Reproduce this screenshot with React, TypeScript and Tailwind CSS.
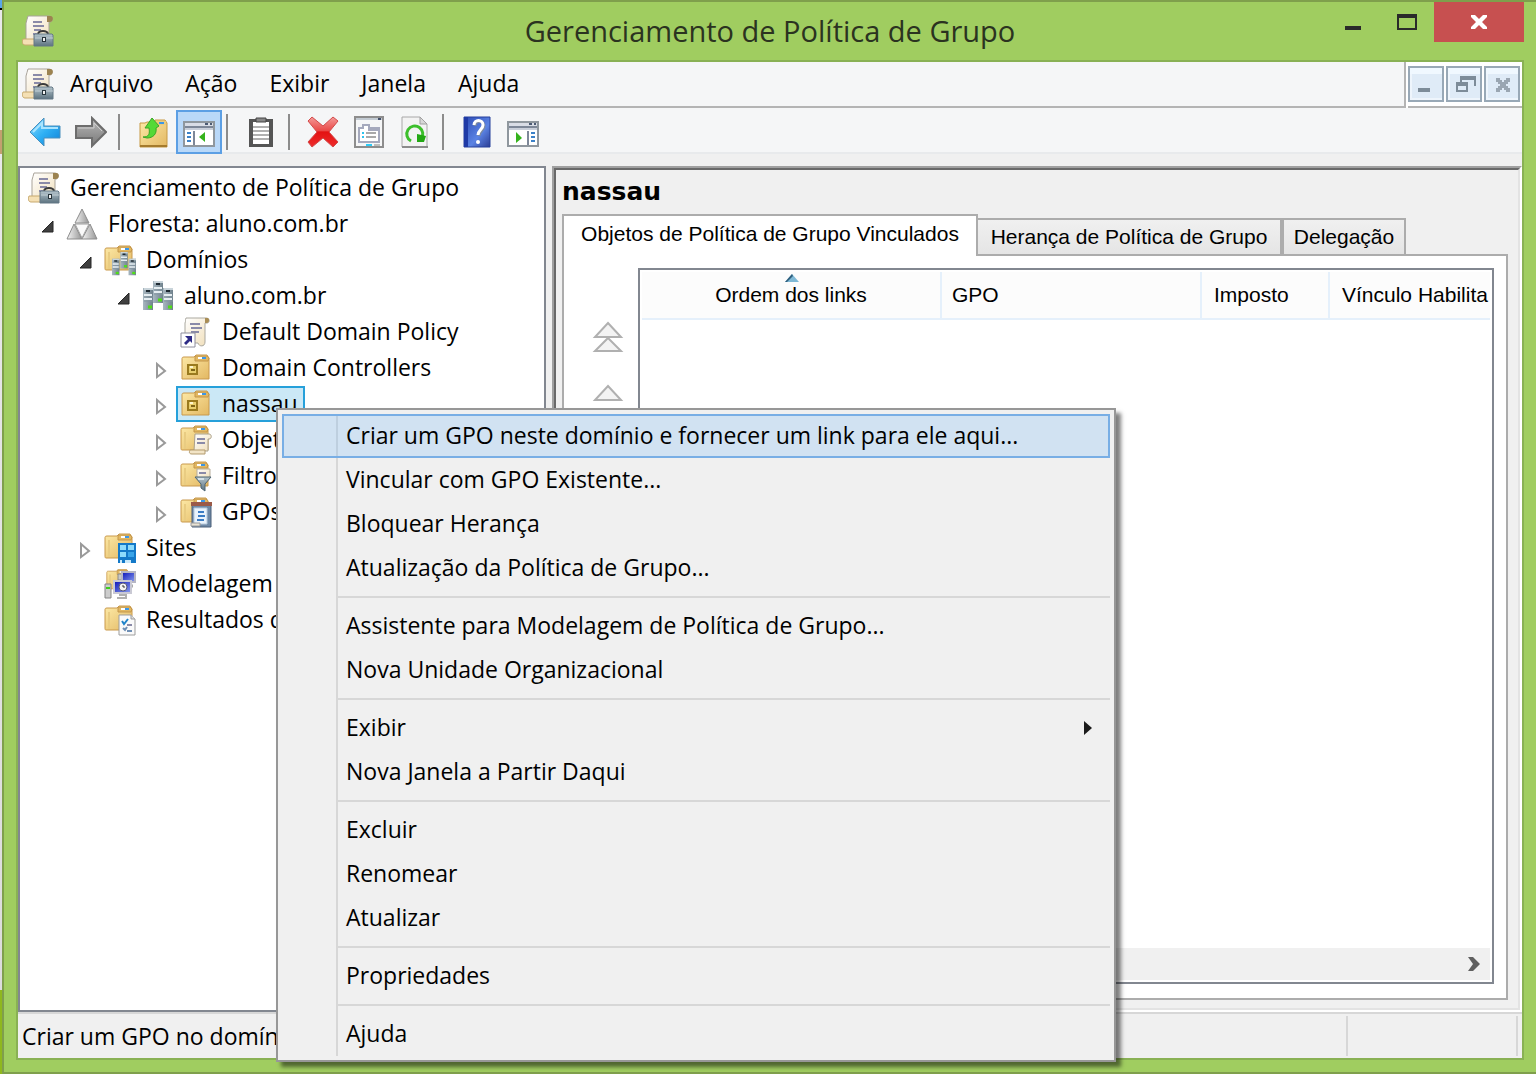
import type { ReactNode } from "react";

const UI = "font-['Open_Sans',sans-serif]";
const LEGACY = "font-['Liberation_Sans',sans-serif]";

function Icon({ children, className = "h-8 w-8" }: { children: ReactNode; className?: string }) {
  return (
    <svg viewBox="0 0 32 32" className={`${className} shrink-0`} aria-hidden="true">
      {children}
    </svg>
  );
}

function Defs() {
  return (
    <svg className="absolute h-0 w-0" aria-hidden="true">
      <defs>
        <linearGradient id="paper" x1="0" y1="0" x2="1" y2="1">
          <stop offset="0" stopColor="#ffffff" />
          <stop offset="1" stopColor="#f0deb8" />
        </linearGradient>
        <linearGradient id="folder" x1="0" y1="0" x2="1" y2="1">
          <stop offset="0" stopColor="#fdeaa8" />
          <stop offset="1" stopColor="#e3b862" />
        </linearGradient>
        <linearGradient id="steel" x1="0" y1="0" x2="0" y2="1">
          <stop offset="0" stopColor="#b4c4cc" />
          <stop offset="1" stopColor="#5d7380" />
        </linearGradient>
        <linearGradient id="blueArrow" x1="0" y1="0" x2="1" y2="1">
          <stop offset="0" stopColor="#8fdcff" />
          <stop offset="0.5" stopColor="#2fb0f4" />
          <stop offset="1" stopColor="#0d7fd6" />
        </linearGradient>
        <linearGradient id="grayArrow" x1="0" y1="0" x2="0" y2="1">
          <stop offset="0" stopColor="#b9b9b9" />
          <stop offset="1" stopColor="#787878" />
        </linearGradient>
        <linearGradient id="red" x1="0" y1="0" x2="0" y2="1">
          <stop offset="0" stopColor="#f49a98" />
          <stop offset="0.45" stopColor="#ea4a48" />
          <stop offset="0.5" stopColor="#e31212" />
          <stop offset="1" stopColor="#ee2c2c" />
        </linearGradient>
        <linearGradient id="help" x1="0" y1="0" x2="1" y2="1">
          <stop offset="0" stopColor="#2c4bb4" />
          <stop offset="0.6" stopColor="#5b83e4" />
          <stop offset="1" stopColor="#2b3d94" />
        </linearGradient>
        <linearGradient id="tri" x1="0" y1="0" x2="1" y2="0">
          <stop offset="0" stopColor="#f4f4f4" />
          <stop offset="1" stopColor="#969696" />
        </linearGradient>
        <linearGradient id="server" x1="0" y1="0" x2="1" y2="0">
          <stop offset="0" stopColor="#a9b8c1" />
          <stop offset="1" stopColor="#6f818c" />
        </linearGradient>
        <linearGradient id="screen" x1="0" y1="0" x2="1" y2="1">
          <stop offset="0" stopColor="#0a12b8" />
          <stop offset="1" stopColor="#8ba0f0" />
        </linearGradient>
      </defs>
    </svg>
  );
}

/* Scroll of parchment with a small toolbox in front */
function GpmcIcon() {
  return (
    <Icon>
      <path d="M6 1h21c4 0 4 6 1 6h-1v20H4V8c1-2 1-5 2-7z" fill="url(#paper)" stroke="#a9a399" />
      <path d="M25 1h4c3 1 2 6-1 6h-3z" fill="#9c8350" />
      <path d="M11 7h9M11 11h11M12 15h7M11 19h4" stroke="#8a8aa8" strokeWidth="2" />
      <path d="M1 24h13v6H3c-3 0-3-4-2-6z" fill="#f5e0b4" stroke="#c7a96e" />
      <path d="M16 19c1-4 9-4 10 0" fill="none" stroke="#3b3b3b" strokeWidth="2" />
      <path d="M13 19h17l1 1v11H12V20z" fill="url(#steel)" stroke="#647986" />
      <path d="M13 23h18" stroke="#c0cdd4" />
      <path d="M20 22h4v5h-4z" fill="#27343b" />
      <path d="M22 23v3" stroke="#f2f2f2" strokeWidth="2" />
    </Icon>
  );
}

function ForestIcon() {
  return (
    <Icon>
      <path d="M16 1 23 15H9z" fill="url(#tri)" stroke="#8d8d8d" />
      <path d="M8 16 16 31H1z" fill="url(#tri)" stroke="#8d8d8d" />
      <path d="M24 16 31 31H16z" fill="url(#tri)" stroke="#8d8d8d" />
      <path d="M9 16h14l-7 14z" fill="#fafafa" stroke="#9c9c9c" />
    </Icon>
  );
}

function FolderShape() {
  return (
    <>
      <path d="M1 6c0-1 0-2 2-2h10l2-2h11l2 3v21H2c-1 0-1-1-1-2z" fill="url(#folder)" stroke="#c9994c" />
      <path d="M5 8v17" stroke="#e9cc82" strokeWidth="2" />
      <path d="M14 3h12l2 2-1 3H14z" fill="#e2b862" stroke="#c4964a" />
      <path d="M17 5h6" stroke="#fff" strokeWidth="2" />
      <path d="M21 5h4" stroke="#3c96e6" strokeWidth="2" />
    </>
  );
}

function Server({ x, y }: { x: number; y: number }) {
  return (
    <g transform={`translate(${x} ${y})`}>
      <path d="M0 0h10v22H0z" fill="url(#server)" />
      <path d="M1 1h9" stroke="#c9d4da" strokeWidth="2" />
      <path d="M3 3h4" stroke="#1f2b33" strokeWidth="2" />
      <path d="M1 7h8M1 11h8" stroke="#e6eef2" strokeWidth="2" />
      <path d="M1 9h9M1 13h9" stroke="#8496a1" />
      <path d="M5 19h4" stroke="#4fe016" strokeWidth="3" />
    </g>
  );
}

function DomainIcon() {
  return (
    <Icon>
      <Server x={11} y={1} />
      <Server x={1} y={8} />
      <Server x={21} y={8} />
    </Icon>
  );
}

function DomainsIcon() {
  return (
    <Icon>
      <FolderShape />
      <g transform="translate(8 8) scale(.75)">
        <Server x={11} y={0} />
        <Server x={0} y={9} />
        <Server x={22} y={9} />
      </g>
    </Icon>
  );
}

function PolicyLinkIcon() {
  return (
    <Icon>
      <path d="M6 2h20c4 0 4 5 1 5h-2v19c0 5-6 5-7 1H5V7c1-2 0-3 1-5z" fill="url(#paper)" stroke="#aaa89f" />
      <path d="M25 2h3c2 1 1 5-1 5h-2z" fill="#a98d55" />
      <path d="M10 8h10M11 12h11M11 16h8" stroke="#8a8aa8" strokeWidth="2" />
      <path d="M1 17h14v14H1z" fill="#fff" stroke="#8e8e9c" />
      <path d="M5 20h7v7l-2-2-4 4-2-2 4-4z" fill="#2d2a86" />
    </Icon>
  );
}

function OuIcon() {
  return (
    <Icon>
      <g transform="translate(1 1)">
        <path d="M1 6c0-1 0-2 2-2h10l2-2h11l2 3v21H1z" fill="url(#folder)" stroke="#c9994c" />
        <path d="M14 3h12l2 2-1 3H14z" fill="#e2b862" stroke="#c4964a" />
        <path d="M17 5h6" stroke="#fff" strokeWidth="2" />
        <path d="M21 5h4" stroke="#3c96e6" strokeWidth="2" />
        <path d="M7 12h9v9H7z" fill="#e8ce6c" stroke="#9a7a1e" strokeWidth="2" />
        <path d="M10 17h4" stroke="#7f6516" strokeWidth="2" />
        <path d="M9 14h3" stroke="#fff7ce" strokeWidth="2" />
      </g>
    </Icon>
  );
}

function ObjectsIcon() {
  return (
    <Icon>
      <FolderShape />
      <path d="M15 10h14c3 0 3 5 0 5h-1v12H14z" fill="url(#paper)" stroke="#aaa08a" />
      <path d="M17 15h8M17 19h8" stroke="#8a8aa8" strokeWidth="2" />
      <path d="M10 26h15v4H12c-3 0-3-2-2-4z" fill="#f2e4c6" stroke="#b39b6e" />
    </Icon>
  );
}

function FiltersIcon() {
  return (
    <Icon>
      <FolderShape />
      <path d="M17 9h13v9H17z" fill="url(#paper)" stroke="#b7ae9c" />
      <path d="M19 13h7" stroke="#8a8aa8" strokeWidth="2" />
      <path d="M15 17h16l-6 7v7l-4-3v-4z" fill="url(#steel)" stroke="#4d6573" />
      <path d="M18 19h6" stroke="#d5e2e8" strokeWidth="2" />
    </Icon>
  );
}

function StarterIcon() {
  return (
    <Icon>
      <FolderShape />
      <path d="M12 7h19v24H12z" fill="#6f89a6" stroke="#4b5e78" />
      <path d="M11 6h21v4H11z" fill="#9b5a48" />
      <path d="M14 12h13v16H14z" fill="#e9f3fc" stroke="#b6c9dc" />
      <path d="M18 16h6M18 20h7M17 24h7" stroke="#3a7cc4" strokeWidth="2" />
      <path d="M11 27h9v3h-9z" fill="#e9e3d4" stroke="#9a9a9a" />
    </Icon>
  );
}

function SitesIcon() {
  return (
    <Icon>
      <FolderShape />
      <path d="M14 11h18v20H14z" fill="#1479c8" />
      <path d="M16 13h6v5h-6zM24 13h6v5h-6zM16 20h6v5h-6z" fill="#8edbfb" />
      <path d="M24 20h6v5h-6z" fill="#39a4e8" />
      <path d="M16 28h2v3h-2zM21 28h6v3h-6z" fill="#c9e9fb" />
    </Icon>
  );
}

function ModelingIcon() {
  return (
    <Icon>
      <g transform="translate(2 0) scale(.8)">
        <FolderShape />
      </g>
      <path d="M14 6h4v6h-4z" fill="#c8c8c8" stroke="#8a8a8a" />
      <path d="M18 4h13v10H18z" fill="url(#screen)" stroke="#b6b6c4" strokeWidth="2" />
      <path d="M21 18h8" stroke="#a9a9a9" strokeWidth="3" />
      <path d="M10 13h17v12H10z" fill="url(#screen)" stroke="#c9c9d4" strokeWidth="2" />
      <circle cx="19" cy="19" r="4" fill="#f3f3f3" stroke="#5a5a78" />
      <path d="M19 17v2h2" stroke="#333" fill="none" />
      <path d="M15 27h7v3h-9" fill="none" stroke="#b0b0b0" strokeWidth="2" />
      <path d="M1 16h6v14H1z" fill="#cdcdcd" stroke="#858585" />
      <path d="M2 20h4" stroke="#3fce1c" strokeWidth="2" />
    </Icon>
  );
}

function ResultsIcon() {
  return (
    <Icon>
      <FolderShape />
      <path d="M15 11h12l4 4v16H15z" fill="#fafafa" stroke="#9d9d9d" />
      <path d="M27 11v4h4" fill="#ddd" stroke="#9d9d9d" />
      <path d="m18 17 2 3 4-5" fill="none" stroke="#2083c9" strokeWidth="2" />
      <path d="M23 21h5" stroke="#8a8aa8" strokeWidth="2" />
      <path d="m19 24 2 2 2-3M23 27h5" fill="none" stroke="#6f8fb5" strokeWidth="2" />
    </Icon>
  );
}

function BackIcon() {
  return (
    <Icon>
      <path d="M1 16 15 2v8h16v12H15v8z" fill="url(#blueArrow)" stroke="#4a8fbd" strokeWidth="1" />
      <path d="M4 16 13 7v5h16" fill="none" stroke="#a9e4ff" strokeWidth="2" />
    </Icon>
  );
}

function ForwardIcon() {
  return (
    <Icon>
      <path d="M31 16 17 2v8H1v12h16v8z" fill="url(#grayArrow)" stroke="#6d6d6d" strokeWidth="2" />
      <path d="M3 12h16V7l8 8" fill="none" stroke="#cfcfcf" />
    </Icon>
  );
}

function UpFolderIcon() {
  return (
    <Icon>
      <path d="M3 7h5l2-1h8V4h10l2 3v24H3z" fill="url(#folder)" stroke="#c79a45" />
      <path d="M18 5h11v4H18z" fill="#eacb7c" />
      <path d="M22 7h5" stroke="#3c96e6" strokeWidth="2" />
      <path d="M3 30h27" stroke="#a57b2c" strokeWidth="2" />
      <path d="M6 21c6 0 7-3 6-9H8l7-10 7 8-3 2c1 6-3 10-9 10z" fill="#54d936" stroke="#3aa526" />
    </Icon>
  );
}

function TreePaneIcon() {
  return (
    <Icon>
      <path d="M1 6h30v24H1z" fill="#fff" stroke="#8f979e" strokeWidth="2" />
      <path d="M2 7h28v3H2z" fill="#d9dde6" />
      <path d="M22 8h3M27 8h2" stroke="#4b5a73" strokeWidth="2" />
      <path d="M2 11h28" stroke="#7d8798" strokeWidth="2" />
      <path d="M2 13h28" stroke="#c9cfda" strokeWidth="2" />
      <path d="M11 15v14" stroke="#7d8798" strokeWidth="2" />
      <path d="M4 17h4M4 21h4M4 25h4" stroke="#3c82c8" strokeWidth="2" />
      <path d="M22 16v10l-6-5z" fill="#35b31c" />
    </Icon>
  );
}

function ActionPaneIcon() {
  return (
    <Icon>
      <path d="M1 6h30v24H1z" fill="#fff" stroke="#8f979e" strokeWidth="2" />
      <path d="M2 7h28v3H2z" fill="#d9dde6" />
      <path d="M22 8h3M27 8h2" stroke="#4b5a73" strokeWidth="2" />
      <path d="M2 11h28" stroke="#7d8798" strokeWidth="2" />
      <path d="M2 13h28" stroke="#c9cfda" strokeWidth="2" />
      <path d="M21 15v14" stroke="#7d8798" strokeWidth="2" />
      <path d="M24 17h4M24 21h4M24 25h4" stroke="#3c82c8" strokeWidth="2" />
      <path d="M9 16v11l6-5z" fill="#35b31c" />
    </Icon>
  );
}

function ClipboardIcon() {
  return (
    <Icon>
      <path d="M4 3h24v28H4z" fill="#555" />
      <path d="M8 6h16v22H8z" fill="#fff" />
      <path d="M11 2h10v4H11z" fill="#888" stroke="#444" />
      <path d="M8 11h16M8 15h16M8 19h16M8 23h16" stroke="#b0b0b0" strokeWidth="2" />
    </Icon>
  );
}

function DeleteIcon() {
  return (
    <Icon>
      <path
        d="M5 1 16 10 26 1l5 4-9 11 9 10-5 5-10-9-11 9-4-5 9-10L1 5z"
        fill="url(#red)"
        stroke="#d24a4a"
      />
    </Icon>
  );
}

function PropertiesIcon() {
  return (
    <Icon>
      <path d="M2 1h28v30H2z" fill="#f5f6f7" stroke="#8d8d8d" strokeWidth="2" />
      <path d="M3 3h26" stroke="#c3cbd3" strokeWidth="2" />
      <path d="M25 3h3" stroke="#43506a" strokeWidth="2" />
      <path d="M6 12h4v-3h6v3h10v14H6z" fill="#fff" stroke="#a5a9bd" strokeWidth="2" />
      <path d="M16 12v2h9" fill="none" stroke="#a5a9bd" strokeWidth="2" />
      <path d="M9 17h2M9 21h2" stroke="#2cc3ee" strokeWidth="2" />
      <path d="M13 17h10M13 21h10" stroke="#a9a9a9" strokeWidth="2" />
      <path d="M13 29h6" stroke="#2ccbf7" strokeWidth="2" />
      <path d="M21 29h6" stroke="#bdbdbd" strokeWidth="2" />
    </Icon>
  );
}

function RefreshIcon() {
  return (
    <Icon>
      <path d="M3 1h18l7 7v23H3z" fill="#f3f3f3" stroke="#a8a8a8" />
      <path d="M21 1v7h7z" fill="#d8d8d8" stroke="#a0a0a0" />
      <path d="M3 31h26" stroke="#8b8b8b" strokeWidth="2" />
      <path d="M12 25a8 8 0 1 1 10-2" fill="none" stroke="#3cbf2b" strokeWidth="3" />
      <path d="M18 18l9 2-2 6-7 0z" fill="#23a814" />
    </Icon>
  );
}

function HelpIcon() {
  return (
    <Icon>
      <path d="M3 1h26v30H3z" fill="url(#help)" stroke="#27409c" />
      <path d="M3 1h4v30H3z" fill="#1f3aa6" />
      <path d="M14 10c0-6 9-6 9 0 0 4-5 5-5 10" fill="none" stroke="#7c8aa0" strokeWidth="3" />
      <path d="M13 9c0-6 9-6 9 0 0 4-5 5-5 10" fill="none" stroke="#fff" strokeWidth="3" />
      <circle cx="17" cy="26" r="2" fill="#fff" />
    </Icon>
  );
}

function Expander({ open }: { open: boolean }) {
  return (
    <svg viewBox="0 0 16 20" className="h-5 w-4 shrink-0" aria-hidden="true">
      {open ? (
        <path d="M11 5v11H0z" fill="#404040" stroke="#262626" />
      ) : (
        <path d="M1 4v13l8-6z" fill="#fff" stroke="#9a9a9a" strokeWidth="2" />
      )}
    </svg>
  );
}

type Node = { depth: number; label: string; icon: ReactNode; state?: "open" | "closed"; selected?: boolean };

const nodes: Node[] = [
  { depth: 0, label: "Gerenciamento de Política de Grupo", icon: <GpmcIcon /> },
  { depth: 1, label: "Floresta: aluno.com.br", icon: <ForestIcon />, state: "open" },
  { depth: 2, label: "Domínios", icon: <DomainsIcon />, state: "open" },
  { depth: 3, label: "aluno.com.br", icon: <DomainIcon />, state: "open" },
  { depth: 4, label: "Default Domain Policy", icon: <PolicyLinkIcon /> },
  { depth: 4, label: "Domain Controllers", icon: <OuIcon />, state: "closed" },
  { depth: 4, label: "nassau", icon: <OuIcon />, state: "closed", selected: true },
  { depth: 4, label: "Objetos", icon: <ObjectsIcon />, state: "closed" },
  { depth: 4, label: "Filtros", icon: <FiltersIcon />, state: "closed" },
  { depth: 4, label: "GPOs", icon: <StarterIcon />, state: "closed" },
  { depth: 2, label: "Sites", icon: <SitesIcon />, state: "closed" },
  { depth: 2, label: "Modelagem", icon: <ModelingIcon /> },
  { depth: 2, label: "Resultados d", icon: <ResultsIcon /> },
];

const indent = ["pl-0", "pl-[22px]", "pl-[60px]", "pl-[98px]", "pl-[136px]"];

function Tree() {
  return (
    <ul role="tree" aria-label="Console" className="pt-[2px]">
      {nodes.map((n) => (
        <li
          key={n.label}
          role="treeitem"
          aria-selected={!!n.selected}
          className={`flex h-9 items-center ${indent[n.depth]}`}
        >
          {n.depth > 0 && (
            <span className="flex w-5 items-center pt-1">{n.state && <Expander open={n.state === "open"} />}</span>
          )}
          <button
            type="button"
            className={`flex h-9 items-center gap-[10px] border-2 pr-[5px] pl-[2px] whitespace-nowrap ${
              n.depth === 0 ? "ml-[4px]" : ""
            } ${n.selected ? "border-[#26a0da] bg-[#cbe8f6]" : "border-transparent"}`}
          >
            {n.icon}
            <span className="pb-[2px]">{n.label}</span>
          </button>
        </li>
      ))}
    </ul>
  );
}

function ToolButton({ label, children, active }: { label: string; children: ReactNode; active?: boolean }) {
  return (
    <button
      type="button"
      aria-label={label}
      className={`flex h-11 w-[46px] items-center justify-center border-2 ${
        active ? "border-[#5c9fe4] bg-[#b9d8f8]" : "border-transparent"
      }`}
    >
      {children}
    </button>
  );
}

function Divider() {
  return <span className="mt-1 mr-[10px] ml-1 h-9 w-[2px] bg-[#8c8c8c]" />;
}

const menuGroups: string[][] = [
  [
    "Criar um GPO neste domínio e fornecer um link para ele aqui...",
    "Vincular com GPO Existente...",
    "Bloquear Herança",
    "Atualização da Política de Grupo...",
  ],
  ["Assistente para Modelagem de Política de Grupo...", "Nova Unidade Organizacional"],
  ["Exibir", "Nova Janela a Partir Daqui"],
  ["Excluir", "Renomear", "Atualizar"],
  ["Propriedades"],
  ["Ajuda"],
];

function ContextMenu() {
  return (
    <div
      role="menu"
      className="absolute top-[408px] left-[276px] w-[840px] border-2 border-[#979797] bg-[#f0f0f0] p-1 shadow-[5px_5px_4px_rgba(0,0,0,0.5)]"
    >
      <div className="relative">
        <span className="absolute inset-y-0 left-[54px] w-[2px] bg-[#d7d7d7]" />
        {menuGroups.map((group, g) => (
          <div key={group[0]}>
            {g > 0 && (
              <div className="flex h-[14px] items-center pl-[56px]">
                <span className="h-[2px] flex-1 bg-[#d7d7d7]" />
              </div>
            )}
            {group.map((item, i) => (
              <button
                type="button"
                role="menuitem"
                key={item}
                className={`relative flex h-11 w-full items-center justify-between border-2 pr-4 pl-[62px] text-left whitespace-nowrap ${
                  g === 0 && i === 0 ? "border-[#78aee5] bg-[#74b8f8]/25" : "border-transparent"
                }`}
              >
                <span className="pb-[2px]">{item}</span>
                {item === "Exibir" && (
                  <svg viewBox="0 0 8 14" className="h-[14px] w-2" aria-hidden="true">
                    <path d="M0 0v14l8-7z" fill="#1b1b1b" />
                  </svg>
                )}
              </button>
            ))}
          </div>
        ))}
      </div>
    </div>
  );
}

function MdiButton({ label, children }: { label: string; children: ReactNode }) {
  return (
    <button
      type="button"
      aria-label={label}
      className="flex h-9 w-9 items-center justify-center border-2 border-[#98a8b6] bg-[#dfebf7] shadow-[inset_0_6px_0_#f0f8ff,inset_2px_-2px_0_#eef5fc]"
    >
      <svg viewBox="0 0 32 32" className="h-8 w-8" aria-hidden="true" shapeRendering="crispEdges">
        {children}
      </svg>
    </button>
  );
}

function MoveIcon({ double }: { double?: boolean }) {
  return (
    <svg viewBox="0 0 32 32" className="h-8 w-8" aria-hidden="true">
      {double ? (
        <>
          <path d="M16 2 29 16H3z" fill="#f3f3f3" stroke="#b0b0b0" strokeWidth="2" />
          <path d="M16 17 29 30H3z" fill="#f3f3f3" stroke="#b0b0b0" strokeWidth="2" />
        </>
      ) : (
        <path d="M16 9 29 23H3z" fill="#f3f3f3" stroke="#b0b0b0" strokeWidth="2" />
      )}
    </svg>
  );
}

export default function App() {
  return (
    <div className={`relative flex min-h-screen overflow-hidden text-[23px] leading-7 text-black ${UI}`}>
      <Defs />
      <div className="w-[2px] bg-[linear-gradient(#5aa7e8_8px,#000_8px,#000_10px,#e8e8ea_10px,#e8e8ea_130px,#c3a070_130px,#c3a070_154px,#e8e8ea_154px,#dcdcdc_990px,#8fb81e_990px)]" />
      <div className="flex min-w-0 flex-1 flex-col border-y-2 border-l-2 border-[#7f9f4c] bg-[#a0cd60] px-3 pb-3">
        <header className="grid h-[58px] grid-cols-[1fr_auto_1fr] items-center">
          <span className="pl-[6px]">
            <GpmcIcon />
          </span>
          <h1 className="text-[29px] leading-9 text-[#2b3320]">Gerenciamento de Política de Grupo</h1>
          <div className="flex justify-end self-start">
            <button type="button" aria-label="Minimizar" className="flex h-10 w-[54px] justify-center pt-6">
              <span className="h-1 w-4 bg-[#2a2a2a]" />
            </button>
            <button type="button" aria-label="Maximizar" className="flex h-10 w-[54px] justify-center pt-3">
              <span className="h-4 w-5 border-2 border-t-4 border-[#2a2a2a]" />
            </button>
            <button
              type="button"
              aria-label="Fechar"
              className="flex h-10 w-[90px] items-center justify-center bg-[#c75050]"
            >
              <svg viewBox="0 0 16 14" className="h-[14px] w-4" aria-hidden="true">
                <path d="M0 0h4l4 4 4-4h4v2l-5 5 5 5v2h-4l-4-4-4 4H0v-2l5-5-5-5z" fill="#fff" />
              </svg>
            </button>
          </div>
        </header>

        <div className="flex min-h-0 flex-1 flex-col border-2 border-[#89b154] bg-[#f0f0f0]">
          <div className="flex h-[46px] gap-[2px] bg-white">
            <nav className="flex flex-1 items-center border-r-2 border-b-2 border-[#b4b4b4] bg-[#f5f6f7] pl-1">
              <GpmcIcon />
              {["Arquivo", "Ação", "Exibir", "Janela", "Ajuda"].map((m) => (
                <button type="button" key={m} className="px-4 pb-[2px]">
                  {m}
                </button>
              ))}
            </nav>
            <div className="flex items-center gap-[2px] border-b-2 border-[#b4b4b4] pr-[2px]">
              <MdiButton label="Minimizar janela">
                <path d="M8 20h12v4H8z" fill="#7d8c99" />
              </MdiButton>
              <MdiButton label="Restaurar janela">
                <path d="M12 8h16v10h-2v-6H14v2h-2zM8 14h12v10H8zM10 18v4h8v-4z" fill="#7d8c99" fillRule="evenodd" />
              </MdiButton>
              <MdiButton label="Fechar janela">
                <path
                  d="M10 10h4v2h2v2h2v-2h2v-2h4v4h-2v2h-2v2h2v2h2v4h-4v-2h-2v-2h-2v2h-2v2h-4v-4h2v-2h2v-2h-2v-2h-2z"
                  fill="#9aa6b2"
                />
              </MdiButton>
            </div>
          </div>

          <div
            role="toolbar"
            aria-label="Ferramentas"
            className="flex h-[46px] items-start border-b-2 border-[#e8eaec] bg-[#f5f6f7] pt-[2px] pl-1"
          >
            <ToolButton label="Voltar">
              <BackIcon />
            </ToolButton>
            <ToolButton label="Avançar">
              <ForwardIcon />
            </ToolButton>
            <Divider />
            <ToolButton label="Um nível acima">
              <UpFolderIcon />
            </ToolButton>
            <ToolButton label="Mostrar árvore" active>
              <TreePaneIcon />
            </ToolButton>
            <Divider />
            <ToolButton label="Copiar">
              <ClipboardIcon />
            </ToolButton>
            <Divider />
            <ToolButton label="Excluir">
              <DeleteIcon />
            </ToolButton>
            <ToolButton label="Propriedades">
              <PropertiesIcon />
            </ToolButton>
            <ToolButton label="Atualizar">
              <RefreshIcon />
            </ToolButton>
            <Divider />
            <ToolButton label="Ajuda">
              <HelpIcon />
            </ToolButton>
            <ToolButton label="Mostrar ações">
              <ActionPaneIcon />
            </ToolButton>
          </div>

          <div className="flex min-h-0 flex-1 gap-[6px] pt-3">
            <aside className="w-[528px] shrink-0 overflow-hidden border-2 border-[#828790] bg-white">
              <Tree />
            </aside>

            <main className="flex min-w-0 flex-1 border-2 border-t-[#a0a0a0] border-r-white border-b-white border-l-[#a0a0a0]">
              <div
                className={`flex min-w-0 flex-1 flex-col border-2 border-t-[#696969] border-r-[#e3e3e3] border-b-[#e3e3e3] border-l-[#696969] pt-2 pr-[10px] pb-2 pl-[6px] text-[21px] ${LEGACY}`}
              >
                <h2 className="pb-2 font-['DejaVu_Sans',sans-serif] text-[25px] leading-7 font-bold">nassau</h2>
                <div role="tablist" className="relative z-10 -mb-[2px] flex items-end whitespace-nowrap">
                  <button
                    type="button"
                    role="tab"
                    aria-selected="true"
                    className="h-[42px] w-[416px] border-2 border-b-0 border-[#acacac] bg-white pb-1 text-center"
                  >
                    Objetos de Política de Grupo Vinculados
                  </button>
                  <button
                    type="button"
                    role="tab"
                    aria-selected="false"
                    className="-ml-[2px] h-[38px] w-[306px] border-2 border-[#acacac] bg-linear-to-b from-[#f0f0f0] to-[#e5e5e5] text-center"
                  >
                    Herança de Política de Grupo
                  </button>
                  <button
                    type="button"
                    role="tab"
                    aria-selected="false"
                    className="h-[38px] w-[124px] border-2 border-[#acacac] bg-linear-to-b from-[#f0f0f0] to-[#e5e5e5] text-center"
                  >
                    Delegação
                  </button>
                </div>
                <div role="tabpanel" className="flex min-h-0 flex-1 border-2 border-[#acacac] bg-white pt-3 pr-3 pb-[14px]">
                  <div className="flex w-[74px] shrink-0 flex-col items-center gap-6 pt-[53px] pl-[14px]">
                    <button type="button" aria-label="Mover para o início">
                      <MoveIcon double />
                    </button>
                    <button type="button" aria-label="Mover para cima">
                      <MoveIcon />
                    </button>
                  </div>
                  <div className="flex min-w-0 flex-1 flex-col border-2 border-[#828790] p-[2px]">
                    <div className="flex-1 overflow-hidden">
                      <table className="w-full table-fixed border-separate border-spacing-0 text-left whitespace-nowrap">
                        <thead>
                          <tr className="h-12 bg-[#fcfcfc]">
                            <th
                              scope="col"
                              className="relative w-[300px] border-r-2 border-b-2 border-[#e5f0fb] text-center font-normal"
                            >
                              <svg
                                viewBox="0 0 14 8"
                                className="absolute top-[2px] left-[143px] h-2 w-[14px]"
                                aria-hidden="true"
                              >
                                <path d="M7 0 14 8H0z" fill="#7fb9d6" />
                                <path d="M7 0 0 8h2l6-6z" fill="#2f5f7d" />
                              </svg>
                              Ordem dos links
                            </th>
                            <th scope="col" className="w-[260px] border-r-2 border-b-2 border-[#e5f0fb] pl-[10px] font-normal">
                              GPO
                            </th>
                            <th scope="col" className="w-[128px] border-r-2 border-b-2 border-[#e5f0fb] pl-3 font-normal">
                              Imposto
                            </th>
                            <th scope="col" className="border-b-2 border-[#e5f0fb] pl-3 font-normal">
                              Vínculo Habilita
                            </th>
                          </tr>
                        </thead>
                      </table>
                    </div>
                    <div className="flex h-8 items-center justify-end bg-[#f0f0f0] pr-[10px]">
                      <button type="button" aria-label="Rolar para a direita">
                        <svg viewBox="0 0 12 14" className="h-[14px] w-3" aria-hidden="true">
                          <path d="M0 0h5l7 7-7 7H0l5-7z" fill="#606060" />
                        </svg>
                      </button>
                    </div>
                  </div>
                </div>
              </div>
            </main>
          </div>

          <footer className="flex h-[46px] items-stretch border-t-2 border-[#d7d7d7] py-[2px] pr-1">
            <span className="flex flex-1 items-center pl-1 whitespace-nowrap">Criar um GPO no domín</span>
            <span className="w-[172px] border-x-2 border-[#d7d7d7]" />
          </footer>
        </div>
      </div>
      <ContextMenu />
    </div>
  );
}
